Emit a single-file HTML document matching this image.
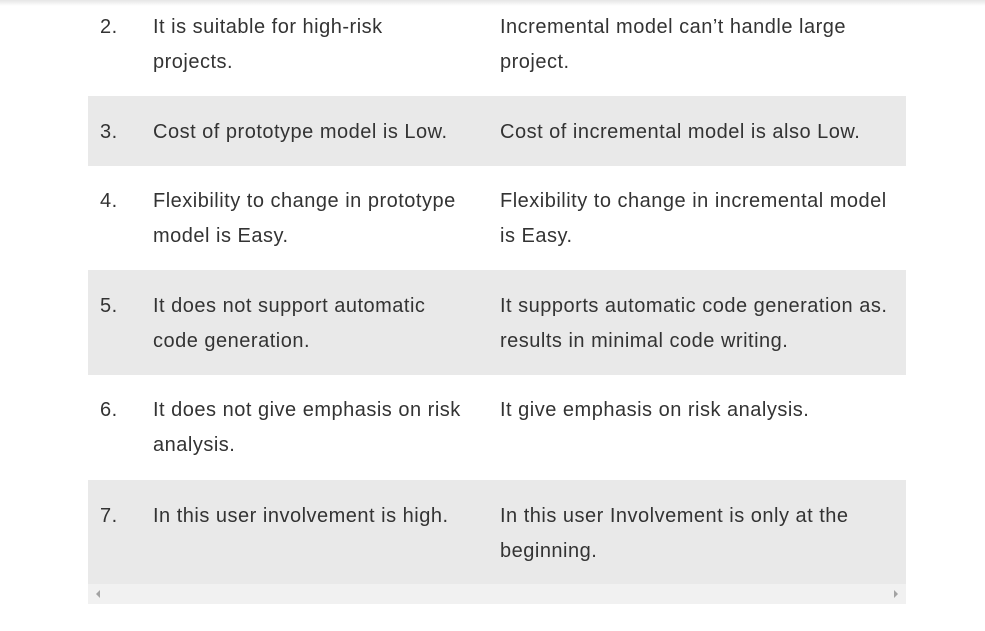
<!DOCTYPE html>
<html><head><style>
body{margin:0;width:985px;height:631px;background:#fff;overflow:hidden;font-family:"Liberation Sans",sans-serif;color:#333;font-size:20px;letter-spacing:0.5px;position:relative}
.top{position:absolute;left:0;top:0;width:985px;height:6px;background:linear-gradient(#e6e6e6,#fff)}
.row{position:absolute;left:88px;width:818px}
.g{background:#e9e9e9}
.c{position:absolute;top:0;line-height:35px;white-space:nowrap}
.n{left:12px}.a{left:65px;width:320px}.b{left:412px;width:400px}
.sb{position:absolute;left:88px;top:584px;width:818px;height:20px;background:#f1f1f1}
.tl{position:absolute;left:8px;top:6px;width:0;height:0;border-top:4px solid transparent;border-bottom:4px solid transparent;border-right:4px solid #a3a3a3}
.tr{position:absolute;right:8px;top:6px;width:0;height:0;border-top:4px solid transparent;border-bottom:4px solid transparent;border-left:4px solid #a3a3a3}
</style></head><body>
<div class="top"></div>
<div class="row" style="top:10px;height:86px"><div class="c n">2.</div><div class="c a">It is suitable for high-risk<br>projects.</div><div class="c b">Incremental model can’t handle large<br>project.</div></div>
<div class="row g" style="top:96px;height:70px"><div class="c n" style="top:19px">3.</div><div class="c a" style="top:19px">Cost of prototype model is Low.</div><div class="c b" style="top:19px">Cost of incremental model is also Low.</div></div>
<div class="row" style="top:166px;height:104px"><div class="c n" style="top:18px">4.</div><div class="c a" style="top:18px">Flexibility to change in prototype<br>model is Easy.</div><div class="c b" style="top:18px">Flexibility to change in incremental model<br>is Easy.</div></div>
<div class="row g" style="top:270px;height:105px"><div class="c n" style="top:19px">5.</div><div class="c a" style="top:19px">It does not support automatic<br>code generation.</div><div class="c b" style="top:19px">It supports automatic code generation as.<br>results in minimal code writing.</div></div>
<div class="row" style="top:375px;height:105px"><div class="c n" style="top:18px">6.</div><div class="c a" style="top:18px">It does not give emphasis on risk<br>analysis.</div><div class="c b" style="top:18px">It give emphasis on risk analysis.</div></div>
<div class="row g" style="top:480px;height:104px"><div class="c n" style="top:19px">7.</div><div class="c a" style="top:19px">In this user involvement is high.</div><div class="c b" style="top:19px">In this user Involvement is only at the<br>beginning.</div></div>
<div class="sb"><div class="tl"></div><div class="tr"></div></div>
</body></html>
